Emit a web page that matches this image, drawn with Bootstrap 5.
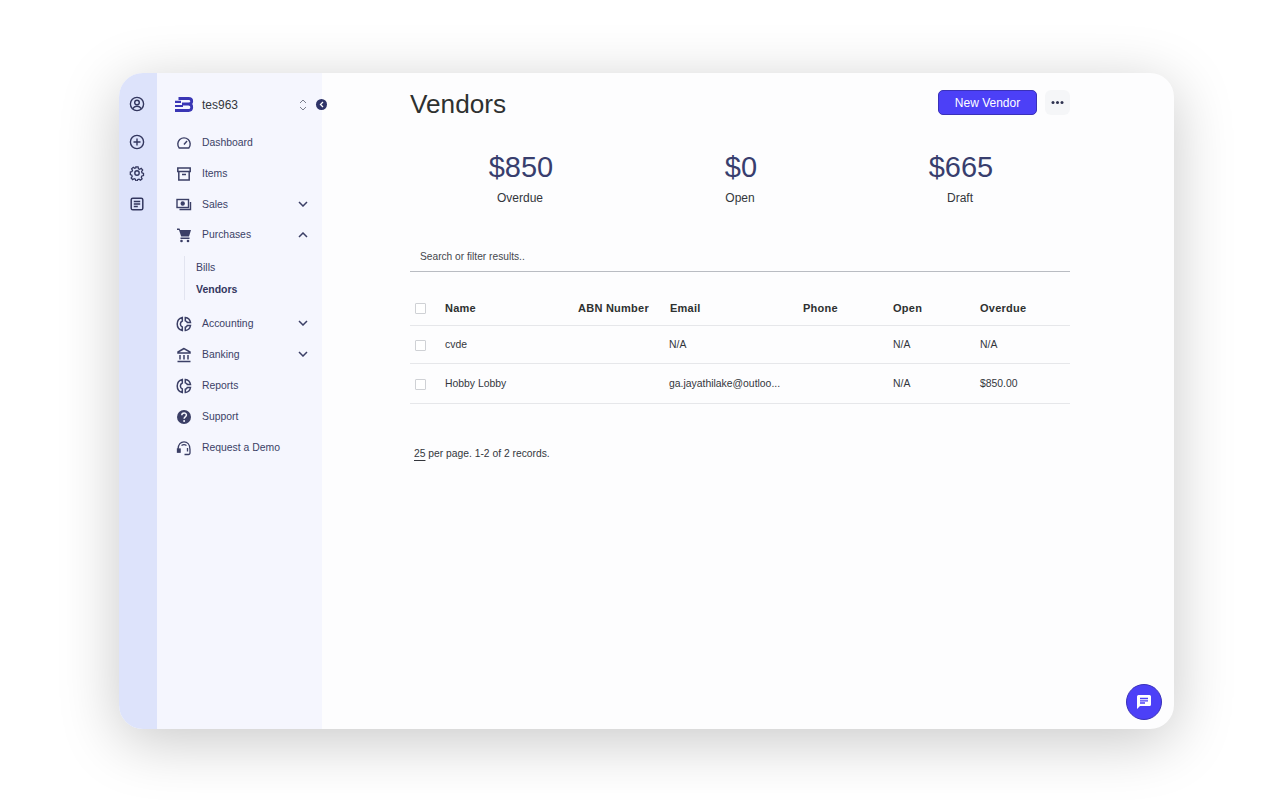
<!DOCTYPE html>
<html lang="en">
<head>
  <meta charset="UTF-8" />
  <meta name="viewport" content="width=device-width, initial-scale=1.0"/>
  <title>Vendors</title>
  <link href="https://cdn.jsdelivr.net/npm/bootstrap@5.3.3/dist/css/bootstrap.min.css" rel="stylesheet" />
  <style>
    html, body { height: 100%; }
    body { background: #fff; font-family: "Liberation Sans", Arial, sans-serif; color: #2b2f33; overflow: hidden; }
    .stage { padding: 73px 106px 71px 119px; height: 800px; }
    .app-win { height: 656px; border-radius: 24px; background: #fdfdfe; box-shadow: 0 12px 60px rgba(0,0,0,.22); position: relative; overflow: hidden; }
    .rail { width: 38px; background: #dde3fb; padding: 23px 2px 0 0; color: #33375f; }
    .rail svg { width: 16px; height: 16px; }
    .rail-item { height: 31px; }
    .rail-first { margin-bottom: 7px; }
    .side { width: 165px; background: #f5f6fe; color: #3b3f66; font-size: 10.4px; padding: 21px 14px 0 18px; }
    .brand { height: 21px; margin-bottom: 12px; font-size: 12px; color: #33363c; }
    .brand-name { margin-left: 8px; }
    .side-row { height: 31px; padding-left: 1px; }
    .side-row-tight { height: 30px; }
    .side-row svg.ic { width: 16px; height: 16px; margin-right: 10px; flex: none; }
    .chev-down { margin-bottom: 2px; }
    .sub-menu { margin: 6px 0 8px 9px; border-left: 1px solid #e2e4f0; padding-left: 11px; font-size: 10.5px; line-height: 22px; }
    .sub-menu b { color: #33375f; }
    .collapse-dot { position: absolute; left: 197px; top: 26px; width: 11px; height: 11px; border-radius: 50%; background: #2f3468; }
    .main-col { padding: 0 104px 0 88px; }
    .page-head { height: 62px; }
    .page-title { font-size: 26.2px; font-weight: 400; color: #2e3130; margin: 0; padding-top: 2px; }
    .head-actions { margin-bottom: 3px; }
    .btn-new { background: #4c40f7; border: 1px solid #3a31b8; color: #fff; font-size: 12px; width: 99px; height: 25px; padding: 0; border-radius: 5px; }
    .btn-more { width: 25px; height: 25px; background: #f5f6f8; border: 0; padding: 0; border-radius: 6px; margin-left: 8px; color: #2f3350; }
    .stat-val { font-size: 29px; line-height: 34px; color: #383e6e; padding-left: 2px; }
    .stat-lbl { font-size: 12px; line-height: 16px; margin-top: 6px; color: #33363c; }
    .stats { padding-top: 15px; height: 104px; }
    .stat-box { width: 220px; text-align: center; }
    .filter-box { height: 33px; border-bottom: 1px solid #b9bcc2; font-size: 10.2px; padding: 10px 10px 0; color: #44474d; }
    .vendor-table { width: 660px; table-layout: fixed; margin: 19px 0 0; font-size: 10.4px; color: #33363c; }
    .vendor-table th { font-size: 11px; letter-spacing: .25px; font-weight: 700; height: 34px; padding: 0; color: #2e3130; vertical-align: middle; border-bottom: 1px solid #e6e7ea; }
    .vendor-table th.mail-head { padding-left: 1px; }
    .vendor-table td { padding: 2px 0 0; vertical-align: middle; border-bottom: 1px solid #e6e7ea; background: transparent; }
    .vendor-table .row-a td { height: 38px; }
    .vendor-table .row-b td { height: 40px; }
    .check-box { display: block; width: 11px; height: 11px; margin: 0 0 0 5px; border: 1px solid #cfd1d5; background: #fff; border-radius: 1px; }
    .vendor-table th .check-box { margin-top: 2px; }
    .pager-line { margin-top: 42px; font-size: 10.3px; padding-left: 4px; color: #33363c; }
    .pager-line u { text-underline-offset: 3px; }
    .chat-fab { position: absolute; left: 1007px; top: 611px; width: 36px; height: 36px; border-radius: 50%; background: #4c40f7; border: 1px solid #3a31b8; }
  </style>
</head>
<body>
<div class="stage">
  <div class="app-win d-flex">
    <div class="rail d-flex flex-column align-items-center flex-shrink-0">
      <div class="rail-item rail-first d-flex justify-content-center"><svg viewBox="0 0 16 16" fill="none" stroke="currentColor" stroke-width="1.4"><circle cx="8" cy="8" r="6.6"/><circle cx="8" cy="6.5" r="2.3"/><path d="M3.8 12.8c1-2 2.4-2.6 4.2-2.6s3.2.6 4.2 2.6"/></svg></div>
      <div class="rail-item d-flex justify-content-center"><svg viewBox="0 0 16 16" fill="none" stroke="currentColor" stroke-width="1.4"><circle cx="8" cy="8" r="6.6"/><path d="M8 4.5v7M4.5 8h7"/></svg></div>
      <div class="rail-item d-flex justify-content-center"><svg viewBox="0 0 16 16" fill="none" stroke="currentColor" stroke-width="1.4"><circle cx="8" cy="8" r="2.2"/><path d="M6.8 1.5h2.4l.4 1.9 1.3.6 1.7-1 1.6 1.9-1.1 1.5.3 1.4 1.7.8v2.2l-1.8.5-.6 1.3.9 1.7-1.8 1.5-1.5-1.1-1.4.4-.6 1.5H6.8l-.5-1.7-1.3-.6-1.7.9-1.6-1.8 1.1-1.5-.4-1.4-1.6-.7V7l1.8-.6.5-1.3-.9-1.6 1.8-1.6 1.5 1.1 1.3-.5z" transform="translate(.6 .6) scale(.92)"/></svg></div>
      <div class="rail-item d-flex justify-content-center"><svg viewBox="0 0 16 16" fill="none" stroke="currentColor" stroke-width="1.5"><rect x="2.2" y="2.2" width="11.6" height="11.6" rx="1.6"/><path d="M4.8 5.500h6.400M4.800 8h6.400M4.800 10.500h4"/></svg></div>
    </div>
    <div class="side flex-shrink-0">
      <div class="brand d-flex align-items-center">
        <svg width="19" height="15" viewBox="0 0 19 15" fill="none" stroke="#3a36b5" stroke-width="2.800"><path d="M3.500 1.500H13.500c4.300 0 4.300 5.500 0 5.500H7M13.500 7c4.300 0 4.300 6.500 0 6.500H0"/><path d="M0 4.800h6M0 9h8" stroke-width="2.200"/></svg>
        <span class="brand-name flex-grow-1">tes963</span>
        <svg width="8" height="12" viewBox="0 0 8 12" fill="none" stroke="#7b7f8c" stroke-width="1"><path d="M1 4l3-3 3 3M1 8l3 3 3-3"/></svg>
        <span style="width:1px"></span>
      </div>
      <div class="side-row d-flex align-items-center"><svg class="ic" viewBox="0 0 16 16" fill="none" stroke="currentColor" stroke-width="1.400"><path d="M3.200 13a6.200 6.200 0 1 1 9.600 0z"/><path d="M8 9.500l3-3.500"/></svg><span>Dashboard</span></div>
      <div class="side-row d-flex align-items-center"><svg class="ic" viewBox="0 0 16 16" fill="none" stroke="currentColor" stroke-width="1.500"><rect x="1.800" y="2" width="12.400" height="3.500"/><path d="M2.800 5.500V14h10.400V5.500M6 8.500h4"/></svg><span>Items</span></div>
      <div class="side-row d-flex align-items-center"><svg class="ic" viewBox="0 0 16 16" fill="none" stroke="currentColor" stroke-width="1.400"><rect x="1" y="2.500" width="11.500" height="8"/><circle cx="6.700" cy="6.500" r="1.500" fill="currentColor"/><path d="M14.500 5v7.500H3.500"/></svg><span class="flex-grow-1">Sales</span><svg class="chev-down" width="10" height="6" viewBox="0 0 10 6" fill="none" stroke="currentColor" stroke-width="1.500"><path d="M1 1l4 4 4-4"/></svg></div>
      <div class="side-row side-row-tight d-flex align-items-center"><svg class="ic" viewBox="0 0 16 16" fill="currentColor"><path d="M1 1.500h2.500l.6 1.500H15l-2 6.500H5.200L3 3H1z"/><path d="M4.500 10.500h9V12h-9z"/><circle cx="5.500" cy="14" r="1.300"/><circle cx="12" cy="14" r="1.300"/></svg><span class="flex-grow-1">Purchases</span><svg width="10" height="6" viewBox="0 0 10 6" fill="none" stroke="currentColor" stroke-width="1.500"><path d="M1 5l4-4 4 4"/></svg></div>
      <div class="sub-menu"><div>Bills</div><div><b>Vendors</b></div></div>
      <div class="side-row d-flex align-items-center"><svg class="ic" viewBox="0 0 16 16" fill="none" stroke="currentColor" stroke-width="1.500"><path d="M6.300 1.500a6.700 6.700 0 0 0 0 13V11a3.300 3.300 0 0 1 0-6z"/><path d="M9.300 1.500a6 6 0 0 1 5.200 5H11.300a3 3 0 0 0-2-1.800zM14.500 9.500a6 6 0 0 1-5.200 5V11.300a3 3 0 0 0 2-1.800z"/></svg><span class="flex-grow-1">Accounting</span><svg class="chev-down" width="10" height="6" viewBox="0 0 10 6" fill="none" stroke="currentColor" stroke-width="1.500"><path d="M1 1l4 4 4-4"/></svg></div>
      <div class="side-row d-flex align-items-center"><svg class="ic" viewBox="0 0 16 16" fill="none" stroke="currentColor" stroke-width="1.500"><path d="M8 1.500L2 5v1h12V5zM4 8v4.500M8 8v4.500M12 8v4.500M1.500 14.500h13"/></svg><span class="flex-grow-1">Banking</span><svg class="chev-down" width="10" height="6" viewBox="0 0 10 6" fill="none" stroke="currentColor" stroke-width="1.500"><path d="M1 1l4 4 4-4"/></svg></div>
      <div class="side-row d-flex align-items-center"><svg class="ic" viewBox="0 0 16 16" fill="none" stroke="currentColor" stroke-width="1.500"><path d="M6.300 1.500a6.700 6.700 0 0 0 0 13V11a3.300 3.300 0 0 1 0-6z"/><path d="M9.300 1.500a6 6 0 0 1 5.200 5H11.300a3 3 0 0 0-2-1.800zM14.500 9.500a6 6 0 0 1-5.200 5V11.300a3 3 0 0 0 2-1.800z"/></svg><span>Reports</span></div>
      <div class="side-row d-flex align-items-center"><svg class="ic" viewBox="0 0 16 16"><circle cx="8" cy="8" r="7" fill="currentColor"/><path d="M5.800 6.300c0-3 4.600-3 4.600-.2 0 1.800-2.300 1.700-2.300 3.600" fill="none" stroke="#f5f6fe" stroke-width="1.500"/><circle cx="8.100" cy="12" r="1" fill="#f5f6fe"/></svg><span>Support</span></div>
      <div class="side-row d-flex align-items-center"><svg class="ic" viewBox="0 0 16 16" fill="none" stroke="currentColor" stroke-width="1.300"><path d="M2 9.500C2 4 5 1.800 8 1.800s6 2.200 6 7.700v3.500a1.500 1.500 0 0 1-1.500 1.500H8.500"/><path d="M5.500 5.500C7 4.500 9 4.500 10.500 5.500M11.500 8v3.500"/><rect x="1.500" y="9" width="2.600" height="3.200" fill="currentColor"/></svg><span>Request a Demo</span></div>
    </div>
    <div class="main-col flex-grow-1">
      <div class="page-head d-flex align-items-center justify-content-between">
        <h1 class="page-title">Vendors</h1>
        <div class="head-actions d-flex align-items-center">
          <button class="btn btn-new" type="button">New Vendor</button>
          <button class="btn btn-more d-flex align-items-center justify-content-center" type="button"><svg width="13" height="3" viewBox="0 0 13 3" fill="currentColor"><circle cx="2" cy="1.500" r="1.500"/><circle cx="6.500" cy="1.500" r="1.500"/><circle cx="11" cy="1.500" r="1.500"/></svg></button>
        </div>
      </div>
      <div class="stats d-flex">
        <div class="stat-box"><div class="stat-val">$850</div><div class="stat-lbl">Overdue</div></div>
        <div class="stat-box"><div class="stat-val">$0</div><div class="stat-lbl">Open</div></div>
        <div class="stat-box"><div class="stat-val">$665</div><div class="stat-lbl">Draft</div></div>
      </div>
      <div class="filter-box">Search or filter results..</div>
      <table class="table vendor-table">
        <colgroup><col style="width:35px"><col style="width:133px"><col style="width:91px"><col style="width:134px"><col style="width:90px"><col style="width:87px"><col></colgroup>
        <thead><tr><th><span class="check-box"></span></th><th>Name</th><th>ABN Number</th><th class="mail-head">Email</th><th>Phone</th><th>Open</th><th>Overdue</th></tr></thead>
        <tbody>
          <tr class="row-a"><td><span class="check-box"></span></td><td>cvde</td><td></td><td>N/A</td><td></td><td>N/A</td><td>N/A</td></tr>
          <tr class="row-b"><td><span class="check-box"></span></td><td>Hobby Lobby</td><td></td><td>ga.jayathilake@outloo...</td><td></td><td>N/A</td><td>$850.00</td></tr>
        </tbody>
      </table>
      <div class="pager-line"><u>25</u> per page. 1-2 of 2 records.</div>
    </div>
    <div class="collapse-dot d-flex align-items-center justify-content-center"><svg width="5" height="7" viewBox="0 0 5 7" fill="none" stroke="#fff" stroke-width="1.300"><path d="M4 1L1.500 3.500 4 6"/></svg></div>
    <div class="chat-fab d-flex align-items-center justify-content-center"><svg width="16" height="16" viewBox="0 0 16 16"><path fill="#fff" d="M2.500 1h11A1.500 1.500 0 0 1 15 2.500v8a1.500 1.500 0 0 1-1.500 1.500H4l-3 3V2.500A1.500 1.500 0 0 1 2.500 1z"/><path stroke="#4c40f7" stroke-width="1.300" d="M4 4.500h8M4 6.800h8M4 9h5"/></svg></div>
  </div>
</div>
<script src="https://cdn.jsdelivr.net/npm/bootstrap@5.3.3/dist/js/bootstrap.bundle.min.js"></script>
</body>
</html>
